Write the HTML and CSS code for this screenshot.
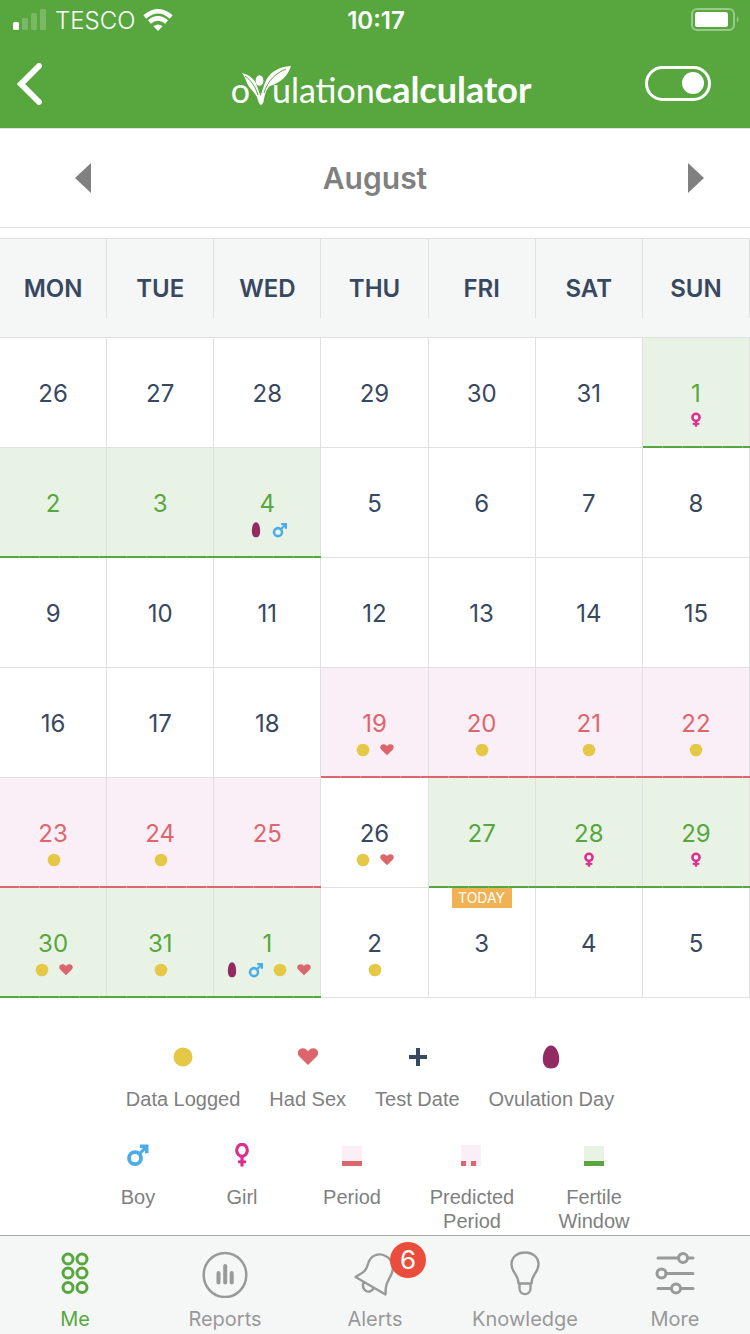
FILE: index.html
```
<!DOCTYPE html>
<html lang="en">
<head>
    <meta charset="UTF-8">
    <meta name="viewport" content="width=device-width, initial-scale=1.0">
    <title>Ovulation Calculator</title>
    <link rel="stylesheet" href="styles.css">
</head>
<body>

    <!-- Shared icons -->
    <svg class="sprite" aria-hidden="true">
        <symbol id="dot" viewBox="0 0 24 24"><circle cx="12" cy="12" r="9.5" fill="#e4c846"/></symbol>
        <symbol id="heart" viewBox="0 0 24 24"><path fill="#dc666c" d="M12 20 L3.6 11.8 C1.2 9.2 1.4 6 3.4 4.4 C6 2.4 10 3 12 6.2 C14 3 18 2.4 20.6 4.4 C22.6 6 22.8 9.2 20.4 11.8 Z"/></symbol>
        <symbol id="plus" viewBox="0 0 24 24"><path d="M13 3 V21 M4 12 H22" stroke="#384860" stroke-width="4" fill="none"/></symbol>
        <symbol id="egg" viewBox="0 0 24 24"><path fill="#922b62" d="M12 .5 C17 .5 20.2 8 20.2 14 C20.2 20.5 17 23.5 12 23.5 C7 23.5 3.8 20.5 3.8 14 C3.8 8 7 .5 12 .5 Z"/></symbol>
        <symbol id="egg-slim" viewBox="0 0 24 24"><path fill="#922b62" d="M12 .5 C16 .5 18.2 7 18.2 13.5 C18.2 20 16 23 12 23 C8 23 5.8 20 5.8 13.5 C5.8 7 8 .5 12 .5 Z"/></symbol>
        <symbol id="boy" viewBox="0 0 24 24"><g fill="none" stroke="#4aaceb"><circle cx="9" cy="15.2" r="6" stroke-width="3.8"/><path d="M13.4 10.8 L20 4.2" stroke-width="3.2"/></g><path d="M13.8 1.5 H22.5 V10.2 H19 V5 H13.8 Z" fill="#4aaceb"/></symbol>
        <symbol id="girl" viewBox="0 0 24 24"><g fill="none" stroke="#de2d90" stroke-width="3.2"><ellipse cx="12" cy="7.3" rx="5.3" ry="6"/><path d="M12 13.5 V23.5"/><path d="M8 18.8 H16" stroke-width="2.8"/></g></symbol>
        <symbol id="girl-bold" viewBox="0 0 24 24"><g fill="none" stroke="#de2d90" stroke-width="3.8"><circle cx="12" cy="8" r="5.4"/><path d="M12 13.5 V22"/><path d="M7 17.8 H17" stroke-width="3"/></g></symbol>
    </svg>

    <header class="header">
        <div class="status">
            <div class="carrier">
                <svg width="34" height="22" viewBox="0 0 34 22" fill="#fff">
                    <rect x="0" y="13" width="6" height="8" rx="1.5"/>
                    <g opacity=".2">
                        <rect x="9" y="9" width="6" height="12" rx="1.5"/>
                        <rect x="18" y="4" width="6" height="17" rx="1.5"/>
                        <rect x="27" y="0" width="6" height="21" rx="1.5"/>
                    </g>
                </svg>
                <span>TESCO</span>
                <svg width="30" height="22" viewBox="0 0 30 22">
                    <g fill="none" stroke="#fff" stroke-width="4.4">
                        <path d="M1.8 8 Q15 -3.6 28.2 8"/>
                        <path d="M6.4 13 Q15 5.8 23.6 13"/>
                    </g>
                    <path d="M15 22 L10.4 17.3 Q15 13.8 19.6 17.3 Z" fill="#fff"/>
                </svg>
            </div>
            <time class="clock">10:17</time>
            <svg class="battery" width="48" height="24" viewBox="0 0 48 24">
                <rect x="1" y="1" width="42" height="21" rx="5" fill="none" stroke="#fff" stroke-opacity=".4" stroke-width="2"/>
                <rect x="4" y="4" width="33" height="15" rx="2.5" fill="#fff"/>
                <path d="M46 8 Q49 11.5 46 15 Z" fill="#fff" fill-opacity=".4"/>
            </svg>
        </div>
        <nav class="nav">
            <button class="back" type="button" aria-label="Back">
                <svg width="26" height="42" viewBox="0 0 26 42"><path d="M22 3 L4 21 L22 39" fill="none" stroke="#fff" stroke-width="6" stroke-linecap="round"/></svg>
            </button>
            <div class="logo">
                <span>o</span>
                <span class="leaf">
                    <svg width="50" height="40" viewBox="0 0 50 40">
                        <path fill="#fff" d="M0 7 C7 9 13 13 15 20 L18.5 30 L22.500 18 C27 6 36 1 49 0 C46 10 38 17 28 20 C24 23 22.500 30 21.500 36 Q19 42 16.500 36 C15 29 11.500 26 8 22 C4 17 4 12 0 7 Z"/>
                        <path fill="none" stroke="#57a73e" stroke-width="1" d="M3 10 C9 14 13 20 16 29 M44 3 C34 7 26 14 22 27"/>
                        <ellipse cx="17.500" cy="14.500" rx="3.900" ry="5.300" fill="#fff"/>
                    </svg>
                </span>
                <span>ulation</span>
                <b>calculator</b>
            </div>
            <input class="toggle" type="checkbox" role="switch" aria-label="Calendar view" checked>
        </nav>
    </header>

    <div class="month">
        <button class="prev" type="button" aria-label="Previous month"><svg width="16" height="30" viewBox="0 0 16 30"><path d="M16 0 V30 L0 15 Z" fill="#808080"/></svg></button>
        <h1>August</h1>
        <button class="next" type="button" aria-label="Next month"><svg width="16" height="30" viewBox="0 0 16 30"><path d="M0 0 V30 L16 15 Z" fill="#808080"/></svg></button>
    </div>

    <table class="calendar">
        <thead>
            <tr>
                <th><span>MON</span></th>
                <th><span>TUE</span></th>
                <th><span>WED</span></th>
                <th><span>THU</span></th>
                <th><span>FRI</span></th>
                <th><span>SAT</span></th>
                <th><span>SUN</span></th>
            </tr>
        </thead>
        <tbody>
            <tr>
                <td>26</td>
                <td>27</td>
                <td>28</td>
                <td>29</td>
                <td>30</td>
                <td>31</td>
                <td class="fertile">1<div class="marks"><svg><use href="#girl-bold"/></svg></div></td>
            </tr>
            <tr>
                <td class="fertile">2</td>
                <td class="fertile">3</td>
                <td class="fertile">4<div class="marks"><svg><use href="#egg-slim"/></svg><svg><use href="#boy"/></svg></div></td>
                <td>5</td>
                <td>6</td>
                <td>7</td>
                <td>8</td>
            </tr>
            <tr>
                <td>9</td>
                <td>10</td>
                <td>11</td>
                <td>12</td>
                <td>13</td>
                <td>14</td>
                <td>15</td>
            </tr>
            <tr>
                <td>16</td>
                <td>17</td>
                <td>18</td>
                <td class="period">19<div class="marks"><svg><use href="#dot"/></svg><svg><use href="#heart"/></svg></div></td>
                <td class="period">20<div class="marks"><svg><use href="#dot"/></svg></div></td>
                <td class="period">21<div class="marks"><svg><use href="#dot"/></svg></div></td>
                <td class="period">22<div class="marks"><svg><use href="#dot"/></svg></div></td>
            </tr>
            <tr>
                <td class="period">23<div class="marks"><svg><use href="#dot"/></svg></div></td>
                <td class="period">24<div class="marks"><svg><use href="#dot"/></svg></div></td>
                <td class="period">25</td>
                <td>26<div class="marks"><svg><use href="#dot"/></svg><svg><use href="#heart"/></svg></div></td>
                <td class="fertile">27</td>
                <td class="fertile">28<div class="marks"><svg><use href="#girl-bold"/></svg></div></td>
                <td class="fertile">29<div class="marks"><svg><use href="#girl-bold"/></svg></div></td>
            </tr>
            <tr>
                <td class="fertile">30<div class="marks"><svg><use href="#dot"/></svg><svg><use href="#heart"/></svg></div></td>
                <td class="fertile">31<div class="marks"><svg><use href="#dot"/></svg></div></td>
                <td class="fertile">1<div class="marks"><svg><use href="#egg-slim"/></svg><svg><use href="#boy"/></svg><svg><use href="#dot"/></svg><svg><use href="#heart"/></svg></div></td>
                <td>2<div class="marks"><svg><use href="#dot"/></svg></div></td>
                <td>3<span class="today">TODAY</span></td>
                <td>4</td>
                <td>5</td>
            </tr>
        </tbody>
    </table>

    <section class="legend">
        <ul class="legend-row">
            <li><svg><use href="#dot"/></svg>Data Logged</li>
            <li><svg><use href="#heart"/></svg>Had Sex</li>
            <li><svg><use href="#plus"/></svg>Test Date</li>
            <li><svg><use href="#egg"/></svg>Ovulation Day</li>
        </ul>
        <ul class="legend-row legend-grid">
            <li><svg><use href="#boy"/></svg>Boy</li>
            <li><svg><use href="#girl"/></svg>Girl</li>
            <li><svg viewBox="0 0 24 24"><path d="M2 3 H22 V18 H2 Z" fill="#fbeff7"/><path d="M2 18 H22 V23 H2 Z" fill="#dc666c"/></svg>Period</li>
            <li><svg viewBox="0 0 24 24"><path d="M1 2 H21 V23 H1 Z" fill="#fbeff7"/><path d="M1 18 H6 V23 H1 Z M11 18 H16 V23 H11 Z" fill="#dc666c"/></svg>Predicted<br>Period</li>
            <li><svg viewBox="0 0 24 24"><path d="M2 3 H22 V18 H2 Z" fill="#e8f3e6"/><path d="M2 18 H22 V23 H2 Z" fill="#57a73e"/></svg>Fertile<br>Window</li>
        </ul>
    </section>

    <nav class="tabs">
        <a href="#me" class="active">
            <svg viewBox="0 0 48 48">
                <circle cx="17" cy="9" r="5"/><circle cx="31" cy="9" r="5"/>
                <circle cx="17" cy="23" r="5"/><circle cx="31" cy="23" r="5"/>
                <circle cx="17" cy="37.500" r="5"/><circle cx="31" cy="37.500" r="5"/>
            </svg>
            Me
        </a>
        <a href="#reports">
            <svg viewBox="0 0 48 48">
                <ellipse cx="24" cy="25" rx="21.300" ry="22" stroke-width="2.500"/>
                <path d="M17.500 23 V32.500 M24.200 16 V32.500 M30.700 23 V32.500" stroke-width="4"/>
            </svg>
            Reports
        </a>
        <a href="#alerts">
            <svg viewBox="0 0 48 48">
                <path stroke-width="2.400" d="M4.500 27 L34.500 44.500 C34.500 34 36 33 40 25 C44 17 41 9 34.500 6 C27 2 19 6 17 14 C15 21 13 22 4.500 27 Z M12.500 32 C10 41 18.500 45 23 38"/>
            </svg>
            <span class="badge">6</span>
            Alerts
        </a>
        <a href="#knowledge">
            <svg viewBox="0 0 48 48">
                <path stroke-width="2.400" d="M17.500 33.500 C17.500 24 10.500 23 10.500 14.500 C10.500 7 16.500 2.500 24 2.500 C31.500 2.500 37.500 7 37.500 14.500 C37.500 23 30.500 24 30.500 33.500 Z M18.500 33.500 V38.500 C18.500 46 29.500 46 29.500 38.500 V33.500"/>
            </svg>
            Knowledge
        </a>
        <a href="#more">
            <svg viewBox="0 0 48 48">
                <path d="M7 8 H27 M37 8 H42 M15 23.500 H42 M7 38.500 H20 M30 38.500 H42"/>
                <circle cx="32" cy="8" r="4.500"/><circle cx="10.500" cy="23.500" r="4.500"/><circle cx="25" cy="38.500" r="4.500"/>
            </svg>
            More
        </a>
    </nav>

</body>
</html>
```
FILE: styles.css
```
* {
    box-sizing: border-box;
}

body {
    margin: 0;
    min-height: 100vh;
    display: flex;
    flex-direction: column;
    font-family: Inter, "Liberation Sans", sans-serif;
    color: #384860;
    background-color: #fff;
}

button {
    padding: 0;
    border: none;
    background: none;
    cursor: pointer;
}

svg {
    display: block;
}

.sprite {
    position: absolute;
    width: 0;
    height: 0;
}

/* Green header */
.header {
    background-color: #57a73e;
    border-bottom: 1px solid #e0e0e0;
    color: #fff;
}

.status {
    display: grid;
    grid-template-columns: 1fr auto 1fr;
    align-items: center;
    height: 40px;
    padding: 0 11px 0 13px;
    font-size: 24px;
}

.carrier {
    display: flex;
    align-items: center;
    gap: 8px;
    font-weight: 300;
}

.clock {
    font-weight: 600;
}

.battery {
    justify-self: end;
}

.nav {
    display: grid;
    grid-template-columns: 1fr auto 1fr;
    align-items: center;
    height: 88px;
    padding-left: 12px;
}

.back {
    justify-self: start;
    margin-left: 5px;
}

.logo {
    display: flex;
    align-items: baseline;
    height: 44px;
    font-family: Lato, sans-serif;
    font-size: 34px;
    line-height: 54px;
}

.logo b {
    font-size: 36px;
}

.leaf {
    position: relative;
    align-self: flex-start;
    width: 22px;
    height: 44px;
}

.leaf svg {
    position: absolute;
    top: 4px;
    left: -8px;
}

.toggle {
    appearance: none;
    display: flex;
    align-items: center;
    justify-content: flex-end;
    justify-self: end;
    width: 66px;
    height: 35px;
    margin: 0 39px 2px 0;
    padding-right: 4px;
    border: 3px solid #fff;
    border-radius: 18px;
}

.toggle::before {
    content: "";
    width: 22px;
    height: 22px;
    border-radius: 50%;
    background-color: #fff;
}

.toggle:not(:checked) {
    justify-content: flex-start;
    padding-left: 4px;
}

/* Month picker */
.month {
    display: grid;
    grid-template-columns: 1fr auto 1fr;
    align-items: center;
    height: 99px;
    margin-bottom: 10px;
    border-bottom: 1px solid #e0e0e0;
}

.month h1 {
    margin: 0;
    font-size: 30px;
    font-weight: 600;
    color: #808080;
}

.prev {
    justify-self: start;
    margin-left: 75px;
}

.next {
    justify-self: end;
    margin-right: 46px;
}

/* Calendar */
.calendar {
    width: 100%;
    table-layout: fixed;
    border-spacing: 0;
    font-size: 24px;
    line-height: 30px;
    text-align: center;
}

.calendar th {
    height: 100px;
    padding: 0 0 19px;
    border-top: 1px solid #e0e0e0;
    border-bottom: 1px solid #e0e0e0;
    background-color: #f5f7f7;
    font-weight: 600;
}

.calendar th span {
    display: block;
    height: 79px;
    padding-top: 35px;
    border-right: 1px solid #e0e0e0;
}

.calendar td {
    position: relative;
    height: 110px;
    padding: 41px 0 0;
    border-right: 1px solid #e0e0e0;
    border-bottom: 1px solid #e0e0e0;
    vertical-align: top;
}

.calendar .fertile {
    background-color: #e8f3e6;
    color: #57a73e;
}

.calendar .period {
    background-color: #fbeff7;
    color: #dc666c;
}

.fertile::after,
.period::after {
    content: "";
    position: absolute;
    left: 0;
    right: -1px;
    bottom: -1px;
    height: 2px;
}

.fertile::after {
    background: repeating-linear-gradient(90deg, #57a73e 0 19px, #7cbb69 19px 20px);
}

.period::after {
    background: repeating-linear-gradient(90deg, #dc666c 0 19px, #e58c94 19px 20px);
}

.marks {
    display: flex;
    justify-content: center;
    gap: 8px;
    padding: 3px 0 0 1px;
}

.marks svg {
    width: 16px;
    height: 16px;
}

.today {
    position: absolute;
    top: 0;
    left: 23px;
    width: 60px;
    background-color: #f0b252;
    color: #fff;
    font-size: 14px;
    line-height: 20px;
}

/* Legend */
.legend {
    display: flex;
    flex-direction: column;
    gap: 32px;
    padding: 47px 10px 0 0;
    font-family: "Liberation Sans", Arial, sans-serif;
    font-size: 20px;
    line-height: 24px;
    color: #808080;
    text-align: center;
}

.legend-row {
    display: flex;
    justify-content: center;
    gap: 29px;
    margin: 0;
    padding: 0;
    list-style: none;
}

.legend-grid {
    display: grid;
    grid-template-columns: 104px 104px 116px 124px 120px;
    gap: 0;
}

.legend svg {
    width: 24px;
    height: 24px;
    margin: 0 auto 18px;
}

/* Bottom tabs */
.tabs {
    display: grid;
    grid-template-columns: repeat(5, 1fr);
    margin-top: auto;
    padding: 14px 0 3px;
    border-top: 1px solid #a8a8a8;
    background-color: #f5f7f7;
}

.tabs a {
    position: relative;
    font-size: 20px;
    line-height: 24px;
    color: #999;
    text-align: center;
    text-decoration: none;
}

.tabs .active {
    color: #57a73e;
}

.tabs svg {
    width: 48px;
    height: 48px;
    margin: 0 auto 9px;
    fill: none;
    stroke: currentColor;
    stroke-width: 3;
    stroke-linecap: round;
    stroke-linejoin: round;
}

.badge {
    position: absolute;
    top: -8px;
    left: 50%;
    width: 36px;
    height: 36px;
    margin-left: 15px;
    border-radius: 50%;
    background-color: #eb4d3d;
    color: #fff;
    font-size: 26px;
    line-height: 36px;
}
```
